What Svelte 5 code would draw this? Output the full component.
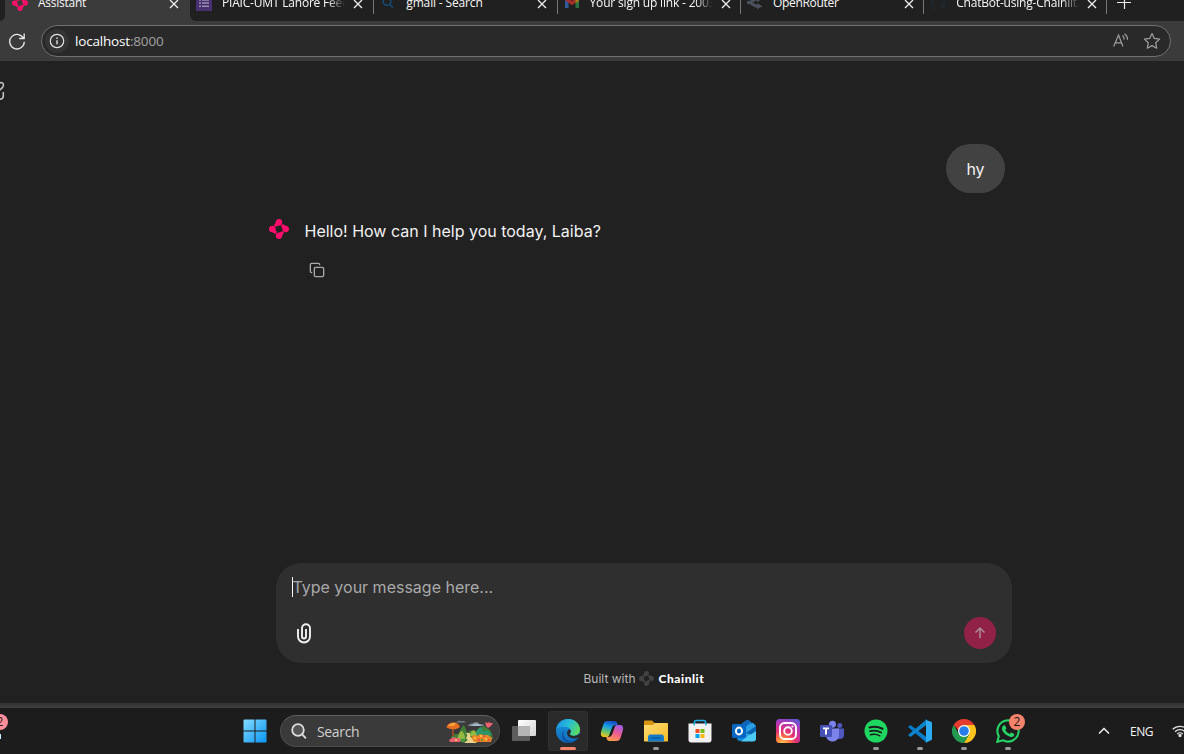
<script>
  const tabs = [
    { title: 'Assistant', icon: 'chainlit', ls: -0.25 },
    { title: 'PIAIC-UMT Lahore Feedback', icon: 'forms', ls: -0.2 },
    { title: 'gmail - Search', icon: 'search', ls: -0.15 },
    { title: 'Your sign up link - 2003', icon: 'gmail', ls: -0.18 },
    { title: 'OpenRouter', icon: 'router', ls: -0.3 },
    { title: 'ChatBot-using-Chainlit/', icon: 'github', ls: -0.2 }
  ];
  const apps = [
    { name: 'taskview' },
    { name: 'edge', active: true },
    { name: 'copilot' },
    { name: 'folder', running: true },
    { name: 'store' },
    { name: 'outlook' },
    { name: 'instagram' },
    { name: 'teams' },
    { name: 'spotify', running: true },
    { name: 'vscode', running: true },
    { name: 'chrome', running: true },
    { name: 'whatsapp', running: true, badge: 2 }
  ];
</script>

{#snippet chainlit(size, color)}
  <svg width={size} height={size} viewBox="0 0 20 20" fill={color}>
    {#each [0, 90, 180, 270] as a}
      <path transform="rotate({a} 10 10)" d="M10 0C12.200 0 13.500 1.600 13.200 3.700 13 5.800 11.700 6.600 10 6.600 8.700 6.700 7.800 7.200 6.900 8L4.700 6C6.400 4.900 6.500 4 6.700 2.900 7 1 8.200 0 10 0Z" />
    {/each}
  </svg>
{/snippet}

{#snippet favicon(name)}
  {#if name === 'chainlit'}
    {@render chainlit(16, '#ff0f6b')}
  {:else if name === 'forms'}
    <svg width="16" height="16" viewBox="0 0 16 16"><path fill="#472f70" d="M0 0h16v16H0z" /><path stroke="#9a8fae" stroke-width="1.5" d="M3 5h2m1 0h7M3 8h2m1 0h7M3 11.300h2m1 0h7" /></svg>
  {:else if name === 'search'}
    <svg width="16" height="16" viewBox="0 0 16 16" fill="none" stroke="#174a73" stroke-width="1.600"><circle cx="7" cy="6.500" r="3.800" /><path d="m9.700 9.500 3.200 3.200" /></svg>
  {:else if name === 'gmail'}
    <svg width="16" height="16" viewBox="0 0 16 16"><path fill="#315a9b" d="M1 4l3.500 2.500V13H1z" /><path fill="#28733f" d="M15 4l-3.500 2.500V13H15z" /><path fill="#a32d27" d="M1 2h2l5 4 5-4h2v3l-7 5.300L1 5z" /><path fill="#a17c16" d="M11.500 3.300 15 2v4l-3.500 2.500z" /></svg>
  {:else if name === 'router'}
    <svg width="16" height="16" viewBox="0 0 16 16" fill="none" stroke="#4a515c" stroke-width="3"><path d="M0 7.500h2C5 7.500 6 3.800 11 3.800M2 7.500c3 0 4 3.700 9 3.700" /><path fill="#4a515c" stroke="none" d="m10 1 5.500 3-5.500 3zm0 7.200 5.500 3-5.500 3z" /></svg>
  {:else}
    <svg width="16" height="16" viewBox="0 0 16 16"><path fill="#20282f" d="M8 .5A7.500 7.500 0 0 0 5.600 15v-2c-2 .3-2.500-1.300-3.200-1.900 1.500-.3 1.500 1 2.600 1 .2-.9.800-1.300.8-1.300C3 10.500 2.700 7 4.200 5.600c-.2-.7-.2-1.300.1-2 1 0 1.800.8 1.800.8a8 8 0 0 1 3.800 0s.8-.8 1.800-.8c.3.700.3 1.300.1 2C13.300 7 13 10.500 10.200 10.800c.5.500.7 1 .7 2V15A7.500 7.500 0 0 0 8 .5Z" /></svg>
  {/if}
{/snippet}

{#snippet appIcon(name)}
  <svg class="app-icon" width="24" height="24" viewBox="0 0 24 24">
    {#if name === 'taskview'}
      <defs><linearGradient id="tv" x2="1" y2="1"><stop stop-color="#fff" /><stop offset="1" stop-color="#d5d5d5" /></linearGradient></defs>
      <rect x="6" y="1" width="18" height="16" rx="1" fill="url(#tv)" />
      <rect x="0" y="7" width="18" height="15" rx="1" fill="#5c5c5c" /><path fill="#b5b5b5" d="M6 7h11.500l.5.500V17H6z" />
    {:else if name === 'edge'}
      <defs>
        <linearGradient id="e1" x1="0" y1=".2" x2="1" y2=".6"><stop stop-color="#1b91df" /><stop offset=".48" stop-color="#27bdd8" /><stop offset="1" stop-color="#5ddc5c" /></linearGradient>
        <linearGradient id="e2" y2="1" x2="0"><stop stop-color="#1598df" /><stop offset="1" stop-color="#1269bd" /></linearGradient>
      </defs>
      <circle cx="12" cy="12" r="12" fill="url(#e2)" />
      <path fill="url(#e1)" d="M.2 10C1.300 4 6 0 12 0c7 0 12 5 12 10.500 0 4-3 6.200-6.300 6.200-3 0-4.500-1.200-3.600-2.200 2-2.200.5-6.200-4.100-6.700C5.300 7.300 1.500 8.500.2 10Z" />
      <path fill="#0e54a0" d="M9.200 10.500C6.500 13 7 18 10.500 20.500c3.500 2.400 8 2.200 12.200-2.500C20.500 22 16.500 24 12 24 5 23 4 13 9.200 10.500Z" />
      <path fill="#2a2a2a" d="M14.200 14.300c-1.200 1.300.6 2.600 3.500 2.600 2.200 0 4-.7 5.300-2L24 16l-1.300 2.200c-5 2.600-11.200.8-11.700-3.700-.2-1.800.8-3.500 2.200-4.200 1.800.6 2.200 2.500 1 4Z" />
    {:else if name === 'copilot'}
      <defs>
        <linearGradient id="c1" x1=".6" x2=".3" y2="1"><stop stop-color="#1848bd" /><stop offset=".35" stop-color="#169de8" /><stop offset=".7" stop-color="#67c56c" /><stop offset="1" stop-color="#f3c51d" /></linearGradient>
        <linearGradient id="c2" x1=".7" x2=".3" y2="1"><stop stop-color="#a35be4" /><stop offset=".5" stop-color="#ee5e8e" /><stop offset="1" stop-color="#ff9c48" /></linearGradient>
      </defs>
      <path fill="url(#c1)" d="M7.500 2h7c2 0 2.700 1.600 3.300 4H15.500c-2 0-2.800.8-3.400 3L9.500 15.500c-.6 2-1.500 2.500-3.500 2.500H4C1 18 .3 15.500 1.200 12.200L3.500 5C4.200 3 5.300 2 7.500 2Z" />
      <path fill="url(#c2)" d="M16.500 22h-7c-2 0-2.700-1.600-3.300-4H8.500c2 0 2.800-.8 3.400-3L14.500 8.500C15.100 6.500 16 6 18 6H20c3 0 3.700 2.500 2.800 5.800L20.500 19c-.7 2-1.800 3-4 3Z" />
      <path fill="#1c1c1c" d="M12.500 8h2l-2.700 8h-2.300z" />
    {:else if name === 'folder'}
      <path fill="#d89512" d="M0 3c0-1 .5-1.500 1.500-1.500H8L10.500 4H22v6H0z" />
      <defs><linearGradient id="fo" x2="1" y2="1"><stop stop-color="#ffdc72" /><stop offset="1" stop-color="#f5ba28" /></linearGradient></defs>
      <path fill="url(#fo)" d="M0 6h9l2-2h12c.7 0 1 .3 1 1v16.500c0 .7-.3 1-1 1H1c-.7 0-1-.3-1-1z" />
      <path fill="#157ac7" d="M4 22.500V18c0-1.500 1-2.500 2.500-2.500h11c1.500 0 2.500 1 2.500 2.500v4.500z" /><path d="M7.500 19h9" stroke="#07599d" stroke-width="1.300" />
    {:else if name === 'store'}
      <path fill="none" stroke="#23a9e2" stroke-width="1.600" d="M6.500 6V3c0-1 .5-1.500 1.500-1.500h8c1 0 1.500.5 1.500 1.500v3" />
      <path fill="#f1f1f1" d="M.5 4.500h23V21c0 1.500-1 2.500-2.500 2.500H3C1.500 23.500.5 22.500.5 21z" />
      <path fill="none" stroke="#23a9e2" stroke-width="1.400" d="M6.200 4v2.500M17.800 4v2.500" />
      <path fill="#f04e1f" d="M7.500 10h4v4h-4z" /><path fill="#7aba1a" d="M12.500 10h4v4h-4z" /><path fill="#06a4ec" d="M7.500 15h4v4h-4z" /><path fill="#fcb913" d="M12.500 15h4v4h-4z" />
    {:else if name === 'outlook'}
      <path fill="#1688d8" d="M5 8 14 1.700c1-.8 2-.8 3 0L24 7v12c0 2-1 3-3 3H8c-2 0-3-1-3-3z" />
      <path fill="#2b9fe4" d="m8 11 13-7.300L24 7v4L12 19z" /><path fill="#1264b5" d="m10 4.300 4-2.800c1-.7 2-.7 3 0l2 1.500L10 10z" />
      <path fill="#4ccaf5" d="M24 10v9.500c0 2-1 3-3 3H9z" /><path fill="#0a62b3" d="m14 14 10-7v5l-5 3.500z" />
      <rect y="5" width="14" height="14" rx="1.500" fill="#0867c2" /><ellipse cx="7" cy="12" rx="3.100" ry="3.500" fill="none" stroke="#fff" stroke-width="1.900" />
    {:else if name === 'instagram'}
      <defs><radialGradient id="ig" cx=".27" cy="1.050" r="1.150"><stop stop-color="#ffd65a" /><stop offset=".25" stop-color="#ff7a3c" /><stop offset=".5" stop-color="#e33176" /><stop offset=".8" stop-color="#b536b6" /><stop offset="1" stop-color="#6158d3" /></radialGradient></defs>
      <rect width="24" height="24" rx="3.500" fill="url(#ig)" /><rect x="4" y="4" width="16" height="16" rx="4.500" fill="none" stroke="#fff" stroke-width="1.900" /><circle cx="12" cy="12" r="3.800" fill="none" stroke="#fff" stroke-width="1.900" /><circle cx="16.500" cy="7.500" r="1.100" fill="#fff" />
    {:else if name === 'teams'}
      <circle cx="19.700" cy="6.500" r="2.500" fill="#5058be" /><path fill="#5058be" d="M15 9.500h9V16c0 3-2 4-5 4h-3z" /><circle cx="12.500" cy="5.300" r="3.500" fill="#7b83eb" /><path fill="#7b83eb" d="M6 9.500h13V16c0 4-3 6.500-6.500 6.500S6 20 6 16z" />
      <rect y="6" width="12" height="12" rx="1" fill="#4651b5" /><path fill="#fff" d="M3 8.500h6v1.700H7V15.500H5v-5.300H3z" />
    {:else if name === 'spotify'}
      <circle cx="12" cy="12" r="11.500" fill="#1ed760" /><g fill="none" stroke="#1c1c1c" stroke-linecap="round"><path stroke-width="2.100" d="M5.500 8.500c4-1.200 9-.8 13 1.300" /><path stroke-width="1.800" d="M6 12.200c3.700-1.100 7.800-.6 11.200 1.300" /><path stroke-width="1.500" d="M6.500 15.700c3.200-.8 6.500-.4 9.300 1.100" /></g>
    {:else if name === 'vscode'}
      <path fill="#087cca" d="m0 8 2.500-2L19 18.500V24z" /><path fill="#0c84cc" d="m0 16 2.500 2L19 5.500V0z" /><path fill="#2babf2" d="M17 .4 23.500 3c.3.200.5.600.5 1v16c0 .4-.2.800-.5 1L17 24c.7-.3 1-.8 1-1.500v-21C18 1 17.700.600 17 .4Z" />
    {:else if name === 'chrome'}
      <path fill="#e33b2e" d="M1.600 6A12 12 0 0 1 22.400 6H12v12z" /><path fill="#fcc31e" d="M22.400 6A12 12 0 0 1 12 24l5.200-9L12 6z" /><path fill="#239b50" d="M1.600 6A12 12 0 0 0 12 24l5.200-9H6.800z" /><circle cx="12" cy="12" r="6" fill="#fff" /><circle cx="12" cy="12" r="4.800" fill="#287ee8" />
    {:else if name === 'whatsapp'}
      <path fill="none" stroke="#25d366" stroke-width="2.100" d="m1.300 22.800 1.500-5.600A10.600 10.600 0 1 1 7 21.300z" /><path fill="#25d366" d="M8.300 6.300c.5 0 .8 0 1 .6l1 2.300c.1.400-.2.800-1 1.700 1.100 2 2.500 3.200 4.600 4.100 1-1.300 1.200-1.600 1.700-1.300l2.300 1.100c.4.200.5.400.3 1.200-.4 1.400-1.900 2.200-3.200 2-4.500-.9-7.900-4.200-8.900-7.200-.5-1.700.6-4.500 2.200-4.500Z" />
    {/if}
  </svg>
{/snippet}

<div class="screen">
  <header class="tabs">
    <div class="strip-start"></div>
    {#each tabs as tab, i}
      <div class="tab" class:active={i === 0} class:second={i === 1} class:divided={i > 1}>
        <span class="fav">{@render favicon(tab.icon)}</span>
        <span class="title" class:fade={i === 1 || i === 3 || i === 5} style="letter-spacing:{tab.ls}px">{tab.title}</span>
        <svg class="close" width="10" height="10" viewBox="0 0 10 10"><path d="m1 1 8 8M9 1 1 9" stroke="#f0f0f0" stroke-width="1.300" /></svg>
      </div>
    {/each}
    <div class="newtab"><svg width="16" height="16" viewBox="0 0 16 16"><path d="M8.500 1v14M1 8.500h14" stroke="#ececec" stroke-width="1.200" /></svg></div>
  </header>

  <div class="toolbar">
    <svg class="reload" width="18" height="18" viewBox="0 0 18 18" fill="none" stroke="#e8e8e8" stroke-width="1.300"><path d="M15.800 7A7.300 7.300 0 1 0 16.300 9.800M16.200 1.500V6.500H11.200" /></svg>
    <div class="address">
      <span class="info"><svg width="16" height="16" viewBox="0 0 16 16" fill="none" stroke="#e2e2e2"><circle cx="8" cy="8" r="6.700" stroke-width="1.200" /><path stroke-width="1.400" d="M8 7.200v4.100M8 4.500v1.400" /></svg></span>
      <span class="url">localhost<i>:8000</i></span>
      <svg width="16" height="16" viewBox="0 0 16 16" fill="none" stroke="#a0a0a0" stroke-width="1.200"><path d="M.7 13.500 5.500 2 10 13.500M2.300 9.800h6.300M9.500 2.500c1.200 1 1.700 2.300 1.600 4M11.500 .7c2 1.500 3.200 3.500 3 6" /></svg>
      <svg class="star" width="18" height="18" viewBox="0 0 18 18" fill="none" stroke="#a0a0a0" stroke-width="1.200" stroke-linejoin="round"><path d="m9 1.500 2.300 4.900 5.300.7-3.900 3.700 1 5.400L9 13.600l-4.700 2.600 1-5.400L1.400 7.100l5.300-.7z" /></svg>
    </div>
  </div>

  <main>
    <svg class="edit" width="6" height="20" viewBox="0 0 6 20" fill="none" stroke="#c0c0c0" stroke-width="1.600"><path d="M-1 2.500C1 .8 3.500 1.500 3.500 4S1.500 7.500-1 9.500M3.300 11V15c0 2-1.300 3.300-4.300 3.300" /></svg>
    <div class="conversation">
      <div class="bubble">hy</div>
      <div class="reply">
        {@render chainlit(20, '#ff0f6b')}
        <p>Hello! How can I help you today, Laiba?</p>
      </div>
      <svg class="copy" width="16" height="16" viewBox="0 0 24 24" fill="none" stroke="#a8a8a8" stroke-width="2" stroke-linecap="round" stroke-linejoin="round"><rect x="8" y="8" width="14" height="14" rx="2" /><path d="M4 16c-1.100 0-2-.9-2-2V4c0-1.100.9-2 2-2h10c1.100 0 2 .9 2 2" /></svg>
    </div>
    <div class="composer">
      <div class="placeholder"><span class="caret"></span>Type your message here...</div>
      <div class="actions">
        <svg width="16" height="22" viewBox="0 0 16 22" fill="none" stroke="#f0f0f0" stroke-width="1.900"><path d="M2 7v7.500a6 6 0 0 0 12 0V6.200a4 4 0 0 0-8 0v8.300a2 2 0 0 0 4 0V7" /></svg>
        <div class="send"><svg width="16" height="16" viewBox="0 0 16 16" fill="none" stroke="#ab8b96" stroke-width="1.500"><path d="M8 13.200V3M3.500 7.500 8 3l4.500 4.500" /></svg></div>
      </div>
    </div>
    <footer><span>Built with</span>{@render chainlit(15, '#434343')}<b>Chainlit</b></footer>
  </main>

  <div class="window-edge"></div>
  <div class="taskbar">
    <div class="weather"><span>2</span><i></i></div>
    <svg class="start" width="24" height="24" viewBox="0 0 24 24"><defs><linearGradient id="win" x2="1" y2="1"><stop stop-color="#82dcff" /><stop offset="1" stop-color="#0994f3" /></linearGradient></defs><path fill="url(#win)" d="M.5 1.500Q.5.500 1.500.500H11.500V11.500H.5zM12.500.500h10q1 0 1 1v10h-11zM.5 12.500h11v11h-10q-1 0-1-1zM12.500 12.500h11v10q0 1-1 1h-10z" /></svg>
    <div class="search">
      <svg width="16" height="17" viewBox="0 0 16 17" fill="none" stroke="#dedede" stroke-width="1.800"><circle cx="7" cy="7" r="5.800" fill="#555" /><path d="m11.200 11.400 3.700 4" /></svg>
      <span>Search</span>
      <svg class="garden" width="48" height="26" viewBox="0 0 48 26">
        <path fill="#77808e" d="M10 3.500c2-2 4-2 5-1 2-1 4 0 5 1zM22 7c1-3 4-2 5-3 3-2 6-1 6 1 3 0 5 0 5 2z" /><path fill="#a7bbca" d="M24 7h12l-3-2-4-.5z" />
        <path fill="#427e38" d="M5 19q1-4 4-4l4 0q2-7 5-9 2 4 3 8l4-3 3 3 5-5 5-2 6 4 3 8-4 4H8z" />
        <path fill="#93bb43" d="M11 21q2-9 5-9 3 3 3 8zm13-4q1-6 4-6 3 3 3 6z" /><path fill="#2b966c" d="M30 14q2-5 5-6l3 5 3-2 5 4-4 3-10-1z" />
        <path fill="#ead48d" d="M19 14c6 2-2 5 3 7l-4 3h13l-5-5c-4-2 0-4-3-5z" />
        <path fill="#8d4c24" d="M6 9h2v8H6z" /><path fill="#e86d20" d="M.5 8.500C1 3 12 1 14 8c-4 3-9 3-13.500.5Z" /><path fill="#f7a340" d="M2 7c2-3 6-4 8-3L8 7z" />
        <path fill="#ec6170" d="m39 3 2 1 2-1 1 1 3 0-2 3-3 2-2-2zM6 19l2-1 2 1 3 0 2 3-2 1H4l-1-2z" /><path fill="#ea8426" d="m25 18 3-2 3 1 3-2 4 1 4 0 4 3-1 4H28z" />
        <g fill="#f8d35a"><circle cx="29" cy="19" r="1" /><circle cx="35" cy="17" r="1" /><circle cx="40" cy="20" r="1" /><circle cx="10" cy="21" r="1" /></g><g fill="#e84b4b"><circle cx="33" cy="21" r="1.200" /><circle cx="38" cy="17" r="1" /><circle cx="43" cy="21" r="1" /></g><g fill="#4a963c"><circle cx="17" cy="21.500" r="2" /><circle cx="36" cy="21" r="1" /></g>
      </svg>
    </div>
    <div class="apps">
      {#each apps as app}
        <div class="app" class:current={app.active}>
          {@render appIcon(app.name)}
          {#if app.active || app.running}<span class="mark" class:wide={app.active}></span>{/if}
          {#if app.badge}<span class="badge">{app.badge}</span>{/if}
        </div>
      {/each}
    </div>
    <div class="tray">
      <svg width="12" height="8" viewBox="0 0 12 8" fill="none" stroke="#f0f0f0" stroke-width="1.500"><path d="m1 6.500 5-5 5 5" /></svg>
      <span>ENG</span>
      <svg class="wifi" width="16" height="14" viewBox="0 0 16 14" fill="none" stroke="#dedede" stroke-width="1.300"><path d="M.7 5.300a10.500 10.500 0 0 1 14.600 0M3 7.800a7 7 0 0 1 10 0M5.200 10a4 4 0 0 1 5.600 0" /><circle cx="8" cy="11.500" r="1" fill="#eee" /></svg>
    </div>
  </div>
</div>

<style>
  :global(body) { margin: 0; overflow: hidden; background: #212121; }
  svg { display: block; flex: none; }
  .screen { width: 1184px; height: 754px; overflow: hidden; display: flex; flex-direction: column; background: #212121; font-family: Inter, sans-serif; color: #f2f2f2; }
  .tabs { height: 21px; display: flex; flex: none; background: #3b3b3b; overflow: hidden; }
  .strip-start { width: 5px; background: #212121; border-radius: 0 0 5px 0; }
  .tab { width: 183.300px; height: 21px; box-sizing: border-box; display: flex; align-items: flex-start; background: #202020; flex: none; position: relative; font: 12px/16px "Open Sans", sans-serif; color: #f8f8f8; }
  .tab.active { width: 185px; background: #3b3b3b; }
  .tab.second { border-bottom-left-radius: 6px; }
  .tab.divided::before { content: ""; position: absolute; left: 0; top: 0; width: 1px; height: 14px; background: #777; }
  .fav { margin: -5px 0 0 6px; width: 16px; flex: none; }
  .divided .fav { margin-left: 7px; }
  .active .fav { margin-left: 7px; }
  .title { margin: -5px 0 0 10px; width: 124px; flex: none; overflow: hidden; white-space: nowrap; }
  .fade { -webkit-mask-image: linear-gradient(90deg, #000 106px, transparent 123px); mask-image: linear-gradient(90deg, #000 106px, transparent 123px); }
  .close { margin: -1px 0 0 7px; }
  .newtab { flex: 1; background: #202020; position: relative; padding-left: 10px; }
  .newtab::before { content: ""; position: absolute; left: 0; top: 0; width: 1px; height: 14px; background: #777; }
  .newtab svg { margin-top: -6px; }
  .toolbar { height: 40px; flex: none; box-sizing: border-box; display: flex; padding: 4px 13px 4px 8px; background: #3b3b3b; }
  .reload { margin-top: 7px; }
  .address { flex: 1; margin-left: 15px; box-sizing: border-box; height: 32px; border: 1px solid #707070; border-radius: 16px; background: #292929; display: flex; align-items: center; padding: 0 9px 0 3px; }
  .info { width: 24px; height: 24px; border-radius: 50%; background: #343434; display: flex; align-items: center; justify-content: center; }
  .url { margin-left: 6px; flex: 1; font: 13.500px/20px "Open Sans", sans-serif; letter-spacing: -.18px; color: #fff; }
  .url i { font-style: normal; color: #a2a2a2; }
  .star { margin-left: 14px; }
  main { flex: 1; min-height: 0; display: flex; flex-direction: column; position: relative; }
  .edit { position: absolute; left: 0; top: 20px; }
  .conversation { height: 502px; flex: none; box-sizing: border-box; padding: 83px 179px 0 269px; display: flex; flex-direction: column; font-size: 16px; line-height: 24px; }
  .bubble { align-self: flex-end; box-sizing: border-box; width: 59px; height: 49px; padding: 13px 0; text-align: center; border-radius: 25px; background: #424242; }
  .reply { margin-top: 26px; display: flex; }
  .reply p { margin: 0 0 0 15.500px; }
  .copy { margin: 19px 0 0 40px; }
  .composer { height: 100px; flex: none; box-sizing: border-box; margin: 0 172px 0 276px; padding: 13px 16px 14px; border-radius: 25px; background: #2f2f2f; display: flex; flex-direction: column; justify-content: space-between; }
  .placeholder { display: flex; align-items: center; height: 22px; color: #a9a9a9; font-size: 16px; }
  .caret { width: 1px; height: 20px; margin-right: -.6px; background: #fff; }
  .actions { display: flex; justify-content: space-between; align-items: center; padding-left: 4px; }
  .send { width: 32px; height: 32px; border-radius: 50%; background: #912147; display: flex; align-items: center; justify-content: center; }
  footer { display: flex; align-items: center; height: 31px; padding-left: 583.500px; font-size: 12px; color: #b8b8b8; }
  footer span { margin-right: 4px; }
  footer b { margin-left: 4px; font: 900 12px/14px Lato, sans-serif; color: #fff; letter-spacing: .55px; }
  .window-edge { height: 5px; flex: none; background: linear-gradient(#303030, #404040); }
  .taskbar { height: 46px; flex: none; background: #1c1c1c; display: flex; align-items: center; font: 12px "Open Sans", sans-serif; }
  .weather { width: 243px; flex: none; align-self: stretch; display: flex; flex-direction: column; }
  .weather span { width: 16px; height: 16px; margin: 6px 0 0 -8px; border-radius: 8px; background: #ff909b; color: #301c20; text-align: center; line-height: 16px; }
  .weather i { width: 1px; height: 5px; margin-top: 4px; background: #c8efff; }
  .search { margin-left: 13px; flex: none; box-sizing: border-box; width: 220px; height: 32px; border: 1px solid #4b4b4b; border-top-color: #606060; border-radius: 16px; background: #3a3a3a; display: flex; align-items: center; padding-left: 10px; font-size: 14px; color: #cfcfcf; }
  .search span { margin-left: 10px; width: 80px; letter-spacing: -.35px; }
  .garden { margin-left: 49px; margin-top: 2px; }
  .apps { display: flex; flex: none; gap: 4px; margin-left: 4px; }
  .app { width: 40px; height: 40px; border-radius: 4px; position: relative; display: flex; align-items: center; justify-content: center; }
  .current { background: #2a2a2a; box-shadow: inset 0 0 0 1px #303030; }
  .mark { position: absolute; bottom: 1px; left: 17px; width: 6px; height: 3px; border-radius: 2px; background: #989898; }
  .mark.wide { left: 12px; width: 16px; background: #f4836b; }
  .badge { position: absolute; left: 21px; top: 3px; width: 16px; height: 16px; border-radius: 8px; background: #f4836b; color: #141414; line-height: 16px; text-align: center; }
  .tray { display: flex; flex: none; align-items: center; margin-left: 70px; color: #f5f5f5; font-size: 12px; }
  .tray span { margin-left: 20px; width: 24px; letter-spacing: -.5px; }
  .wifi { margin-left: 18px; }
</style>
